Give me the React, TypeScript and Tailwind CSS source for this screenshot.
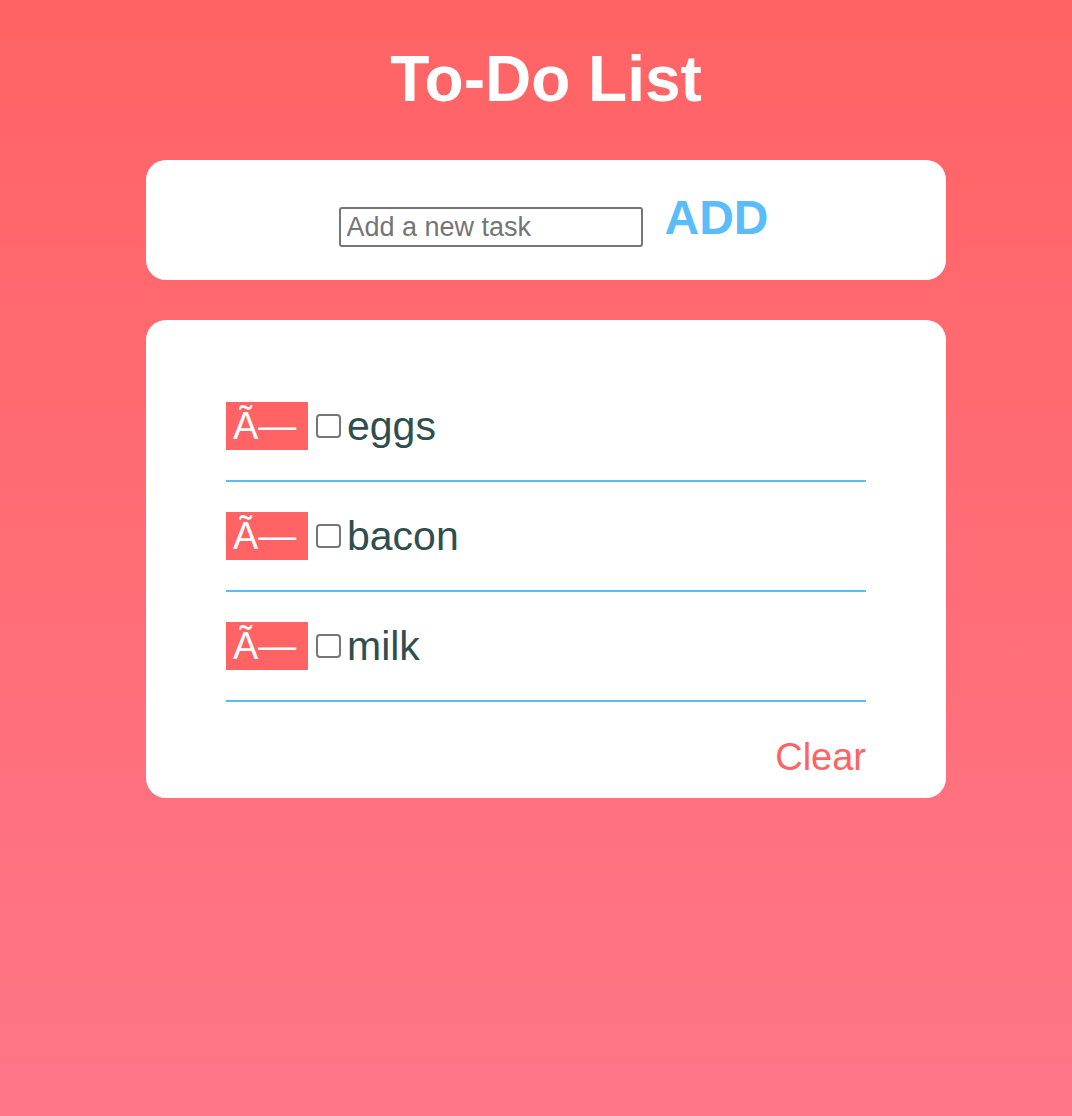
import { useState } from 'react';

const initialTasks = ['eggs', 'bacon', 'milk'];

const App = () => {
    const [tasks, setTasks] = useState<string[]>(initialTasks);
    const [text, setText] = useState('');

    const addTask = () => {
        if (!text.trim()) return;
        setTasks([...tasks, text.trim()]);
        setText('');
    };

    return (
        <div className="min-h-[1116px] w-full bg-gradient-to-b from-[#ff6364] to-[#ff7688] flex flex-col items-center pt-[47px] pl-[20px] font-['Liberation_Sans',Arial,sans-serif]">
            <h1 className="text-white font-bold text-[64px] leading-none">To-Do List</h1>

            <div className="mt-[49px] w-[800px] h-[120px] bg-white rounded-[20px] flex justify-center items-start pt-[34px] pl-[15px]">
                <input
                    value={text}
                    onChange={(e) => setText(e.target.value)}
                    placeholder="Add a new task"
                    className="mt-[13px] w-[304px] h-[40px] border-2 border-[#767676] rounded-[3px] px-[6px] text-[27px] text-gray-700 placeholder:text-[#757575] outline-none"
                />
                <button
                    onClick={addTask}
                    className="ml-[22px] text-[48px] leading-none font-bold text-[#5bbdf8]"
                >
                    ADD
                </button>
            </div>

            <div className="mt-[40px] w-[800px] bg-white rounded-[20px] pt-[52px] px-[80px] pb-[22px]">
                <ul>
                    {tasks.map((task, i) => (
                        <li key={i} className="flex items-center py-[30px] border-b-2 border-[#5bbdf8]">
                            <button
                                onClick={() => setTasks(tasks.filter((_, j) => j !== i))}
                                className="w-[82px] h-[48px] bg-[#ff6364] text-white text-[38px] leading-none flex items-center justify-start pl-[7px]"
                            >
                                Ã—
                            </button>
                            <input
                                type="checkbox"
                                className="ml-[8px] w-[25px] h-[24px] appearance-none border-2 border-[#767676] rounded-[4px] bg-white"
                            />
                            <span className="ml-[6px] text-[41px] leading-none text-[#2f4f4f]">{task}</span>
                        </li>
                    ))}
                </ul>
                <div className="flex justify-end mt-[36px]">
                    <button onClick={() => setTasks([])} className="text-[38px] leading-none text-[#ff6364]">
                        Clear
                    </button>
                </div>
            </div>
        </div>
    );
};

export default App;
